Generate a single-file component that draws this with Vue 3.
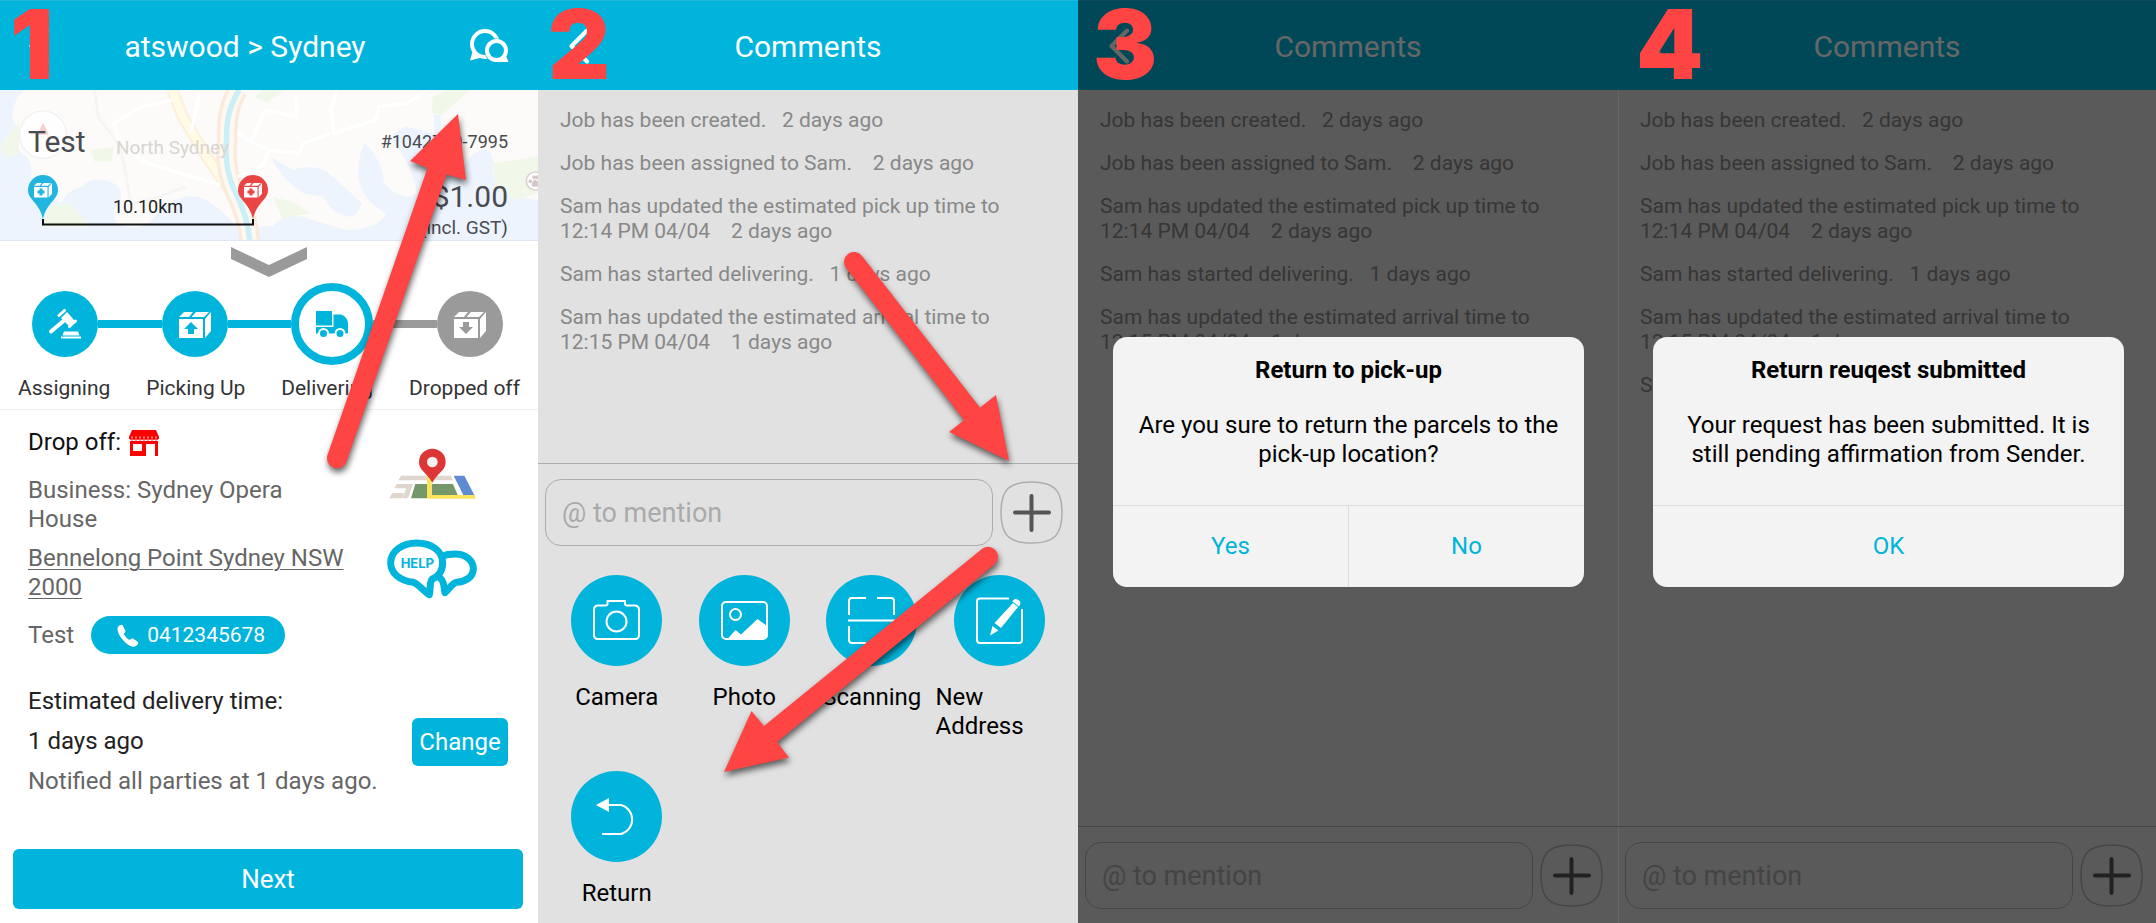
<script setup>
import { ref } from 'vue'

const comments = [
  { text: 'Job has been created.', gap: 3, when: '2 days ago' },
  { text: 'Job has been assigned to Sam.', gap: 4, when: '2 days ago' },
  { text: 'Sam has updated the estimated pick up time to 12:14 PM 04/04', gap: 4, when: '2 days ago' },
  { text: 'Sam has started delivering.', gap: 3, when: '1 days ago' },
  { text: 'Sam has updated the estimated arrival time to 12:15 PM 04/04', gap: 4, when: '1 days ago' }
]

const screens = [
  {
    id: 2,
    comments,
    actions: [
      { icon: 'camera', label: 'Camera' },
      { icon: 'photo', label: 'Photo' },
      { icon: 'scan', label: 'Scanning' },
      { icon: 'edit', label: 'New Address' },
      { icon: 'return', label: 'Return' }
    ]
  },
  {
    id: 3,
    comments,
    dialog: {
      title: 'Return to pick-up',
      body: 'Are you sure to return the parcels to the pick-up location?',
      buttons: ['Yes', 'No']
    }
  },
  {
    id: 4,
    comments: [...comments, { text: 'Sam', gap: 0, when: '' }],
    dialog: {
      title: 'Return reuqest submitted',
      body: 'Your request has been submitted. It is still pending affirmation from Sender.',
      buttons: ['OK']
    }
  }
]

const steps = [
  { icon: 'gavel', label: 'Assigning', state: 'done' },
  { icon: 'pickup', label: 'Picking Up', state: 'done' },
  { icon: 'truck', label: 'Delivering', state: 'current' },
  { icon: 'dropoff', label: 'Dropped off', state: 'todo' }
]

const drafts = ref({ 2: '', 3: '', 4: '' })
const nbsp = (n) => '\u00a0'.repeat(n)
</script>

<template>
  <main class="board">
    <svg class="defs" aria-hidden="true">
      <symbol id="box" viewBox="0 0 32 27">
        <path d="M0 8h24v19H0zM5 1h9l-4 5H0zM17 1h13l-5 5H12.500zM26 8l6-7v19l-6 7z" />
      </symbol>
      <symbol id="back" viewBox="0 0 22 36">
        <path d="M19 2.500 3.500 18 19 33.500" fill="none" stroke="currentColor" stroke-width="4" stroke-linecap="round" stroke-linejoin="round" />
      </symbol>
    </svg>

    <section class="screen job">
      <header class="bar bar-job">
        <button class="icon-btn" aria-label="Back"><svg class="back"><use href="#back" /></svg></button>
        <h1>atswood &gt; Sydney</h1>
        <button class="icon-btn chat-btn" aria-label="Comments">
          <svg width="40" height="36" viewBox="0 0 40 36">
            <circle cx="16" cy="16" r="13" fill="none" stroke="#fff" stroke-width="4" />
            <path d="M1 32.500 4 22l9 7.500z" fill="#fff" />
            <circle cx="27.500" cy="22.500" r="12" fill="#00b4dc" />
            <path d="M39.500 34H28l8.500-7.500z" fill="#fff" />
            <circle cx="27.500" cy="22.500" r="9.500" fill="#00b4dc" stroke="#fff" stroke-width="4" />
          </svg>
        </button>
      </header>

      <div class="map">
        <svg class="map-art" viewBox="0 270 1562 450" preserveAspectRatio="none" aria-hidden="true">
          <rect y="270" width="1562" height="450" fill="#fcfbf9" />
          <path d="M0 270H70Q30 310 38 360Q60 400 52 450Q100 480 90 530Q130 590 180 610Q190 570 240 560Q250 535 300 540Q360 550 350 600Q320 640 340 670Q400 700 440 660Q520 560 600 600Q660 640 720 720H0Z" fill="#edf4fe" />
          <path d="M700 720Q740 670 790 680Q820 640 880 650L1000 690Q1100 690 1120 640Q1050 600 1040 530Q1040 460 1060 430Q1110 480 1115 550Q1170 610 1210 580Q1200 500 1150 440Q1120 400 1180 380L1260 400V345H1280V400Q1330 400 1345 500Q1380 440 1420 450Q1440 490 1430 520Q1450 590 1562 600V720Z" fill="#edf4fe" />
          <path d="M785 470L850 510Q900 490 950 515Q1000 560 1050 610Q1040 650 1010 650Q960 640 940 590L880 580Q820 540 785 470Z" fill="#edf4fe" />
          <path d="M0 450Q20 400 55 370V460L20 475ZM265 450L330 440 325 485 275 485ZM740 290L760 270H830L775 308ZM1255 290L1300 270H1365L1300 330 1280 345 1255 340ZM145 620L200 610 240 650 260 680H120ZM790 590L850 605 900 640 820 655ZM1430 490L1562 470V580L1500 600 1440 560Z" fill="#f1f8e9" />
          <path d="M500 270L530 350 600 470 660 560" fill="none" stroke="#fdf1dc" stroke-width="36" />
          <path d="M500 270L530 350 600 470 660 560" fill="none" stroke="#fffbe4" stroke-width="22" />
          <path d="M690 270Q655 330 660 420Q650 500 680 570Q720 650 725 720" fill="none" stroke="#fbeadb" stroke-width="60" />
          <path d="M690 270Q655 330 660 420Q650 500 680 570Q720 650 725 720" fill="none" stroke="#fdf8f0" stroke-width="40" />
          <path d="M695 270Q655 330 658 420Q650 500 680 570Q720 650 725 720" fill="none" stroke="#cbeff6" stroke-width="16" />
          <path d="M500 300L410 320 330 370 350 440 430 490 640 555M580 280L555 395M690 400L740 430 780 450 760 500 690 530M860 290V350L770 330 730 420M980 270L960 330 970 400 1090 360 1100 320 1180 310 1240 270M780 450L870 460 880 430 960 400" fill="none" stroke="#fff" stroke-width="9" />
          <path d="M275 270L285 350 350 440 380 610M380 610L460 590 540 560" fill="none" stroke="#f5f5f6" stroke-width="8" />
          <ellipse cx="125" cy="404" rx="68" ry="71" fill="#fff" fill-opacity=".8" stroke="#eee" stroke-width="3" />
          <path d="M125 368L142 404H108Z" fill="#f8cfcf" />
          <ellipse cx="1554" cy="543" rx="26" ry="27" fill="#fff" stroke="#ddd4d4" stroke-width="5" />
          <path d="M1554 540q13 12 6 18h-13q-5-8 7-18M1539 540a3 4 0 1 0 1 0M1550 528a3 4 0 1 0 1 0M1559 528a3 4 0 1 0 1 0" fill="#d5c8c8" stroke="#d5c8c8" stroke-width="4" />
        </svg>
        <span class="place">North Sydney</span>
        <div class="map-left">
          <h2>Test</h2>
          <div class="route">
            <svg width="240" height="52" viewBox="0 0 240 52" aria-hidden="true">
              <path d="M15 44v5.500h210V44" fill="none" stroke="#111" stroke-width="2" />
              <g v-for="pin in [{ x: 0, c: '#22b5e0' }, { x: 210, c: '#ea4545' }]" :key="pin.x" :transform="`translate(${pin.x} 0)`">
                <path d="M15 0A15 15 0 0 0 0 15C0 25 11 27 15 44C19 27 30 25 30 15A15 15 0 0 0 15 0Z" :fill="pin.c" />
                <use href="#box" x="6" y="7" width="18" height="16" fill="#fff" />
                <path d="M13 13.500v7M9.500 17h7" :stroke="pin.c" stroke-width="3" />
              </g>
            </svg>
            <span>10.10km</span>
          </div>
        </div>
        <div class="map-right">
          <span class="job-id">#1042730-7995</span>
          <span class="price">$1.00</span>
          <span class="gst">(incl. GST)</span>
        </div>
      </div>

      <div class="progress">
        <button class="expand" aria-label="Show details">
          <svg width="76" height="30" viewBox="0 0 76 30"><path d="M0 0 38 18 76 0v12L38 30 0 12z" fill="#9a9a9a" /></svg>
        </button>
        <div class="track" aria-hidden="true">
          <template v-for="(step, i) in steps" :key="step.label">
            <i v-if="i" class="link" :class="step.state" />
            <span class="node" :class="step.state">
              <svg v-if="step.icon === 'gavel'" width="32" height="30" viewBox="0 0 32 30" fill="#fff">
                <path d="M12 27.600h20v2H12zM15 22.500h14l1.500 4H13.500zM12 9l6-6 7.500 8.500-6 5z" />
                <path d="M10 6.500 15.500 1.500M20.500 17.500 26.500 12" stroke="#fff" stroke-width="3" stroke-linecap="round" />
                <path d="M15 11.500 2 22.500" stroke="#fff" stroke-width="4" stroke-linecap="round" />
              </svg>
              <svg v-else-if="step.icon === 'truck'" width="32" height="27" viewBox="0 0 32 27" fill="#00b4dc">
                <path d="M0 0h16v14.500H0zM0 16h17.500V3.500H25Q32 6 32 13v9.500H0z" />
                <g stroke="#fff" stroke-width="2"><circle cx="7.500" cy="22.500" r="4.500" /><circle cx="24" cy="22.500" r="4.500" /></g>
              </svg>
              <svg v-else width="32" height="27" viewBox="0 0 32 27">
                <use href="#box" fill="#fff" />
                <path v-if="step.icon === 'pickup'" d="M12 11l7 7h-4v5H9v-5H5z" fill="#00b4dc" />
                <path v-else d="M12 23l7-7h-4v-5H9v5H5z" fill="#9a9a9a" />
              </svg>
            </span>
          </template>
        </div>
        <ol class="labels">
          <li v-for="step in steps" :key="step.label">{{ step.label }}</li>
        </ol>
      </div>

      <div class="details">
        <div class="address">
          <h3>
            Drop off:
            <svg width="30" height="26" viewBox="0 0 30 26" aria-hidden="true">
              <path d="M3 0h24l3 7v2H0V7z" fill="#f00" />
              <path d="M1 8a2 2 0 0 0 4 0a2 2 0 0 0 4 0a2 2 0 0 0 4 0a2 2 0 0 0 4 0a2 2 0 0 0 4 0a2 2 0 0 0 4 0a2 2 0 0 0 4 0" fill="none" stroke="#f00" stroke-width="1" />
              <path d="M3 6.500v2M7 6.500v2M11 6.500v2M15 6.500v2M19 6.500v2M23 6.500v2M27 6.500v2" stroke="#fff" stroke-width="1" />
              <path d="M1 11h28v15h-3V14h-9v12H1zM4 14v7h9v-7z" fill="#f00" fill-rule="evenodd" />
            </svg>
          </h3>
          <p>Business: Sydney Opera House</p>
          <p><a href="#address">Bennelong Point Sydney NSW 2000</a></p>
          <p class="contact">
            Test
            <a class="phone" href="tel:0412345678">
              <svg width="22" height="23" viewBox="0 0 22 23" aria-hidden="true">
                <path d="M1 3Q3 0 5.500 1L8.500 7Q8.500 9 6.500 10Q9 14 12.500 16Q14 14 16 14.500L21 18Q22 20 19 22Q15 24 10 20Q3 14 1 8Q0 5 1 3Z" fill="#fff" />
              </svg>
              0412345678
            </a>
          </p>
        </div>
        <div class="shortcuts">
          <button class="icon-btn" aria-label="Open map">
            <svg width="87" height="52" viewBox="58 55 261 156">
              <path d="M95 138H243L250 152H86ZM81 163H130L115 206H98L110 176H74ZM68 190H103L97 206H59Z" fill="#dfd6ce" />
              <path d="M137 163H172V206H124ZM186 163H250L264 196H186Z" fill="#75986b" />
              <path d="M252 138H284L314 196H281Z" fill="#5f8bd3" />
              <path d="M172 140H186V196H315L318 207H172Z" fill="#fde35a" />
              <path d="M188 57A40 40 0 0 0 148 97C148 122 172 130 188 159C204 130 228 122 228 97A40 40 0 0 0 188 57Z" fill="#dc3636" />
              <circle cx="188" cy="97" r="16" fill="#f3f1f1" />
            </svg>
          </button>
          <button class="icon-btn" aria-label="Help">
            <svg width="90" height="60" viewBox="54 326 270 180">
              <g fill="none" stroke="#00b4dc" stroke-width="21" stroke-linejoin="round" stroke-linecap="round">
                <path d="M222 377C235 371 250 371 258 371C290 371 313 390 313 415C313 440 290 454 262 456C246 462 240 478 228 487C224 470 226 455 216 446" />
                <path d="M143 338C100 338 65 362 65 397C65 428 92 452 134 456C152 464 162 482 181 493C185 475 181 455 190 446C212 436 221 420 221 397C221 362 188 338 143 338Z" fill="#fff" />
              </g>
              <text x="145" y="413" text-anchor="middle" font-family="Inter, sans-serif" font-weight="700" font-size="39" fill="#00b4dc">HELP</text>
            </svg>
          </button>
        </div>
      </div>

      <div class="eta">
        <div>
          <h3>Estimated delivery time:</h3>
          <p class="strong">1 days ago</p>
          <p>Notified all parties at 1 days ago.</p>
        </div>
        <button class="change">Change</button>
      </div>

      <button class="next">Next</button>

      <span class="number n1">1</span>
      <svg class="arrows" viewBox="0 0 538 923" aria-hidden="true">
        <path d="M327.500 455 427.500 168 410 161 458 114 466 180 446.500 174.500 346.500 461.500A10 10 0 0 1 327.500 455Z" />
      </svg>
    </section>

    <section v-for="s in screens" :key="s.id" class="screen comments" :class="`screen-${s.id}`">
      <header class="bar">
        <button class="icon-btn" aria-label="Back"><svg class="back"><use href="#back" /></svg></button>
        <h1>Comments</h1>
      </header>
      <ul class="log">
        <li v-for="c in s.comments" :key="c.text">{{ c.text }}{{ nbsp(c.gap) }}{{ c.when.replace(/ /g, '\u00a0') }}</li>
      </ul>
      <form class="composer" @submit.prevent>
        <input v-model="drafts[s.id]" type="text" aria-label="Comment" placeholder="@ to mention" />
        <button type="button" class="plus" aria-label="More actions">
          <svg width="63" height="63" viewBox="0 0 63 63">
            <path d="M31.500 1C54 1 62 9 62 31.500S54 62 31.500 62 1 54 1 31.500 9 1 31.500 1Z" fill="none" stroke="#adadad" stroke-width="1.500" />
            <path d="M31.500 15v34M15 31.500h34" stroke="#555" stroke-width="4" stroke-linecap="round" />
          </svg>
        </button>
      </form>
      <div v-if="s.actions" class="actions">
        <button v-for="a in s.actions" :key="a.label" class="action">
          <svg width="91" height="91" viewBox="0 0 91 91" fill="none" stroke="#fff" stroke-width="2" stroke-linejoin="round">
            <circle cx="45.500" cy="45.500" r="45.500" fill="#00b4dc" stroke="none" />
            <template v-if="a.icon === 'camera'">
              <path d="M27 30.500h7.500q2 0 2-2V26H54v2.500q0 2 2 2h7.500q4.500 0 4.500 4.500v25q0 4-4 4H27q-4 0-4-4V35q0-4.500 4-4.500Z" />
              <circle cx="45.500" cy="46.500" r="10" />
            </template>
            <template v-else-if="a.icon === 'photo'">
              <rect x="23" y="27" width="45" height="37" rx="4" />
              <circle cx="36.500" cy="39.500" r="5.500" />
              <path d="M29 63.500 36.500 55 42 59.500 58.500 44 68 51V61q0 3-3 3H29Z" fill="#fff" stroke="none" />
            </template>
            <path v-else-if="a.icon === 'scan'" d="M23 40V26q0-3 3-3h14M51 23h14q3 0 3 3v14M23 51v14q0 3 3 3h14M51 68h14q3 0 3-3V51M22 45.500h47" />
            <template v-else-if="a.icon === 'edit'">
              <path d="M55 23.500H26q-3 0-3 3V65q0 3 3 3h39q3 0 3-3V34" />
              <path d="M59 28 64 32 47 53 40.500 48ZM58.500 26q2-3 5-1.500 4 2 2.500 5l-1 2-6.500-5ZM36 60.500 38.500 51 44.500 55.500Z" fill="#fff" stroke="none" />
            </template>
            <template v-else>
              <path d="M37 34h13a15 15 0 0 1 0 29H31" />
              <path d="M25 34 38 27v14z" fill="#fff" stroke="none" />
            </template>
          </svg>
          <span>{{ a.label }}</span>
        </button>
      </div>

      <div v-if="s.dialog" class="scrim">
        <div class="dialog" role="alertdialog" :aria-labelledby="`title-${s.id}`">
          <h2 :id="`title-${s.id}`">{{ s.dialog.title }}</h2>
          <p>{{ s.dialog.body }}</p>
          <div class="choices">
            <button v-for="b in s.dialog.buttons" :key="b">{{ b }}</button>
          </div>
        </div>
      </div>

      <span class="number" :class="`n${s.id}`">{{ s.id }}</span>
      <svg v-if="s.id === 2" class="arrows" viewBox="0 0 540 923" aria-hidden="true">
        <path d="M324 256 442 407.500 458 395 471 461 411 432 426 420 308 268A10 10 0 0 1 324 256Z" />
        <path d="M457.500 563.500 239 742 251 757.500 186 772 213.500 711 226 726 444.500 548.500A10 10 0 0 1 457.500 563.500Z" />
      </svg>
    </section>
  </main>
</template>

<style>
body {
  margin: 0;
}
</style>

<style scoped>
.board {
  display: grid;
  grid-template-columns: 538fr 540fr 540fr 538fr;
  min-height: 100vh;
  font-family: Roboto, 'Liberation Sans', sans-serif;
  font-size: 24px;
  line-height: 29px;
  color: #666;
}
.defs {
  position: absolute;
  width: 0;
  height: 0;
}
h1, h2, h3, p, ol, ul {
  margin: 0;
  padding: 0;
  font-weight: 400;
  font-size: inherit;
  list-style: none;
}
button {
  margin: 0;
  padding: 0;
  border: 0;
  background: none;
  font: inherit;
  color: inherit;
  cursor: pointer;
}
svg {
  display: block;
}
.screen {
  position: relative;
  display: flex;
  flex-direction: column;
  min-width: 0;
}
.job {
  background: #fff;
}
.comments {
  background: #e1e1e1;
}
.screen-4 {
  box-shadow: inset 1px 0 #fff;
}

.bar {
  display: grid;
  grid-template-columns: 78px 1fr 78px;
  align-items: center;
  box-sizing: border-box;
  height: 90px;
  border-top: 1px solid #1fb9de;
  background: #00b4dc;
  color: #fff;
}
.bar-job {
  grid-template-columns: 54px 1fr 102px;
}
.bar h1 {
  padding-top: 2px;
  font-size: 30px;
  line-height: 36px;
  text-align: center;
  white-space: nowrap;
}
.icon-btn {
  display: flex;
}
.bar .icon-btn {
  padding-left: 30px;
}
.bar-job .icon-btn {
  padding-left: 28px;
}
.bar .chat-btn {
  padding-left: 33px;
}
.back {
  width: 22px;
  height: 36px;
}

.map {
  position: relative;
  display: flex;
  justify-content: space-between;
  height: 150px;
  padding: 0 30px 0 28px;
  border-bottom: 1px solid #dfe6ef;
  color: #484b50;
  overflow: hidden;
}
.map-art {
  position: absolute;
  inset: 0;
  width: 100%;
  height: 100%;
}
.place {
  position: absolute;
  left: 116px;
  top: 43px;
  color: #d7d5d0;
  font-size: 19px;
}
.map-left, .map-right {
  position: relative;
  display: flex;
  flex-direction: column;
}
.map-left h2 {
  padding-top: 34px;
  font-size: 30px;
  line-height: 36px;
}
.route {
  display: grid;
  padding-top: 15px;
}
.route > * {
  grid-area: 1 / 1;
}
.route span {
  justify-self: center;
  align-self: center;
  padding: 12px 0 0;
  color: #222;
  font-size: 18px;
  line-height: 20px;
}
.map-right {
  align-items: flex-end;
  padding-top: 40px;
}
.job-id {
  font-size: 18px;
  line-height: 24px;
}
.gst {
  font-size: 19px;
  line-height: 24px;
}
.price {
  padding: 25px 0 1px;
  font-size: 30px;
  line-height: 36px;
}

.progress {
  border-bottom: 1px solid #f0f0f0;
}
.expand {
  display: flex;
  margin: 6px auto 6px;
}
.track {
  display: flex;
  align-items: center;
  padding: 0 35px 0 32px;
}
.node {
  display: flex;
  align-items: center;
  justify-content: center;
  width: 66px;
  height: 66px;
  border-radius: 50%;
  background: #00b4dc;
}
.node.current {
  border: 8px solid #00b4dc;
  background: #fff;
}
.node.todo {
  background: #9a9a9a;
}
.link {
  flex: 1;
  height: 8px;
  background: #00b4dc;
}
.link.todo {
  background: #9a9a9a;
}
.labels {
  display: flex;
  justify-content: space-between;
  padding: 11px 18px 9px;
  color: #333;
  font-size: 21px;
  line-height: 24px;
}

.details {
  display: flex;
  justify-content: space-between;
  padding: 18px 61px 0 28px;
}
.address {
  flex: 0 1 330px;
}
.address h3 {
  display: flex;
  align-items: center;
  gap: 8px;
  color: #111;
}
.address p {
  margin-top: 10px;
}
.address h3 + p {
  margin: 19px 50px 0 0;
}
.address a {
  color: inherit;
  text-underline-offset: 3px;
  text-decoration-thickness: 1px;
}
.address .contact {
  display: flex;
  align-items: center;
  gap: 17px;
  margin-top: 14px;
}
.address .phone {
  display: flex;
  align-items: center;
  gap: 8px;
  padding: 0 20px 0 26px;
  border-radius: 19px;
  background: #00b4dc;
  color: #fff;
  font-size: 21px;
  line-height: 38px;
  text-decoration: none;
}
.shortcuts {
  display: flex;
  flex-direction: column;
  align-items: center;
  gap: 39px;
  padding-top: 20px;
}

.eta {
  display: flex;
  align-items: center;
  justify-content: space-between;
  padding: 33px 30px 0 28px;
}
.eta h3, .eta .strong {
  color: #222;
}
.eta p {
  margin-top: 11px;
}
.change {
  width: 96px;
  border-radius: 6px;
  background: #00b4dc;
  color: #fff;
  line-height: 48px;
}
.next {
  margin: auto 15px 14px 13px;
  border-radius: 6px;
  background: #00b4dc;
  color: #fff;
  font-size: 26px;
  line-height: 60px;
}

.log {
  flex: 1;
  padding: 18px 40px 0 22px;
  color: #888;
  font-size: 21px;
  line-height: 25px;
}
.log li {
  margin-bottom: 18px;
}
.composer {
  display: flex;
  align-items: center;
  gap: 7px;
  padding: 15px 15px 14px 7px;
  border-top: 1px solid #adadad;
}
.composer input {
  flex: 1;
  box-sizing: border-box;
  min-width: 0;
  height: 67px;
  padding: 0 16px;
  border: 1px solid #adadad;
  border-radius: 16px;
  outline: 0;
  background: none;
  color: #333;
  font: 27px Roboto, 'Liberation Sans', sans-serif;
}
.composer input::placeholder {
  color: #aaa;
  opacity: 1;
}
.actions {
  display: grid;
  grid-template-columns: repeat(4, 1fr);
  align-items: start;
  padding: 15px;
  color: #000;
  row-gap: 30px;
}
.action {
  display: flex;
  flex-direction: column;
  align-items: center;
  gap: 17px;
  text-align: left;
}
.action span {
  max-width: 100%;
}

.scrim {
  position: absolute;
  inset: 0;
  display: flex;
  align-items: center;
  padding: 0 34px 0 35px;
  background: rgba(0, 0, 0, 0.6);
}
.screen-4 .composer {
  padding-right: 13px;
}
.screen-4 .scrim {
  padding-right: 32px;
}
.dialog {
  flex: 1;
  border-radius: 14px;
  background: #f3f3f3;
  color: #000;
  text-align: center;
}
.dialog h2 {
  padding-top: 19px;
  font-weight: 700;
}
.dialog p {
  padding: 26px 20px 36px;
}
.choices {
  display: flex;
  border-top: 1px solid #ddd;
  color: #00b4dc;
}
.choices button {
  flex: 1;
  line-height: 81px;
}
.choices button + button {
  border-left: 1px solid #ddd;
}

.number {
  position: absolute;
  top: 0;
  color: #ff4444;
  font: 900 96px/88px Inter, 'Liberation Sans', sans-serif;
}
.n1 {
  left: 10px;
}
.n2 {
  left: 10px;
}
.n3 {
  left: 15px;
}
.n4 {
  left: 18px;
}
.arrows {
  position: absolute;
  top: 0;
  left: 0;
  width: 100%;
  fill: #ff4444;
  filter: drop-shadow(1px 4px 3px rgba(0, 0, 0, 0.6));
  pointer-events: none;
}
</style>
